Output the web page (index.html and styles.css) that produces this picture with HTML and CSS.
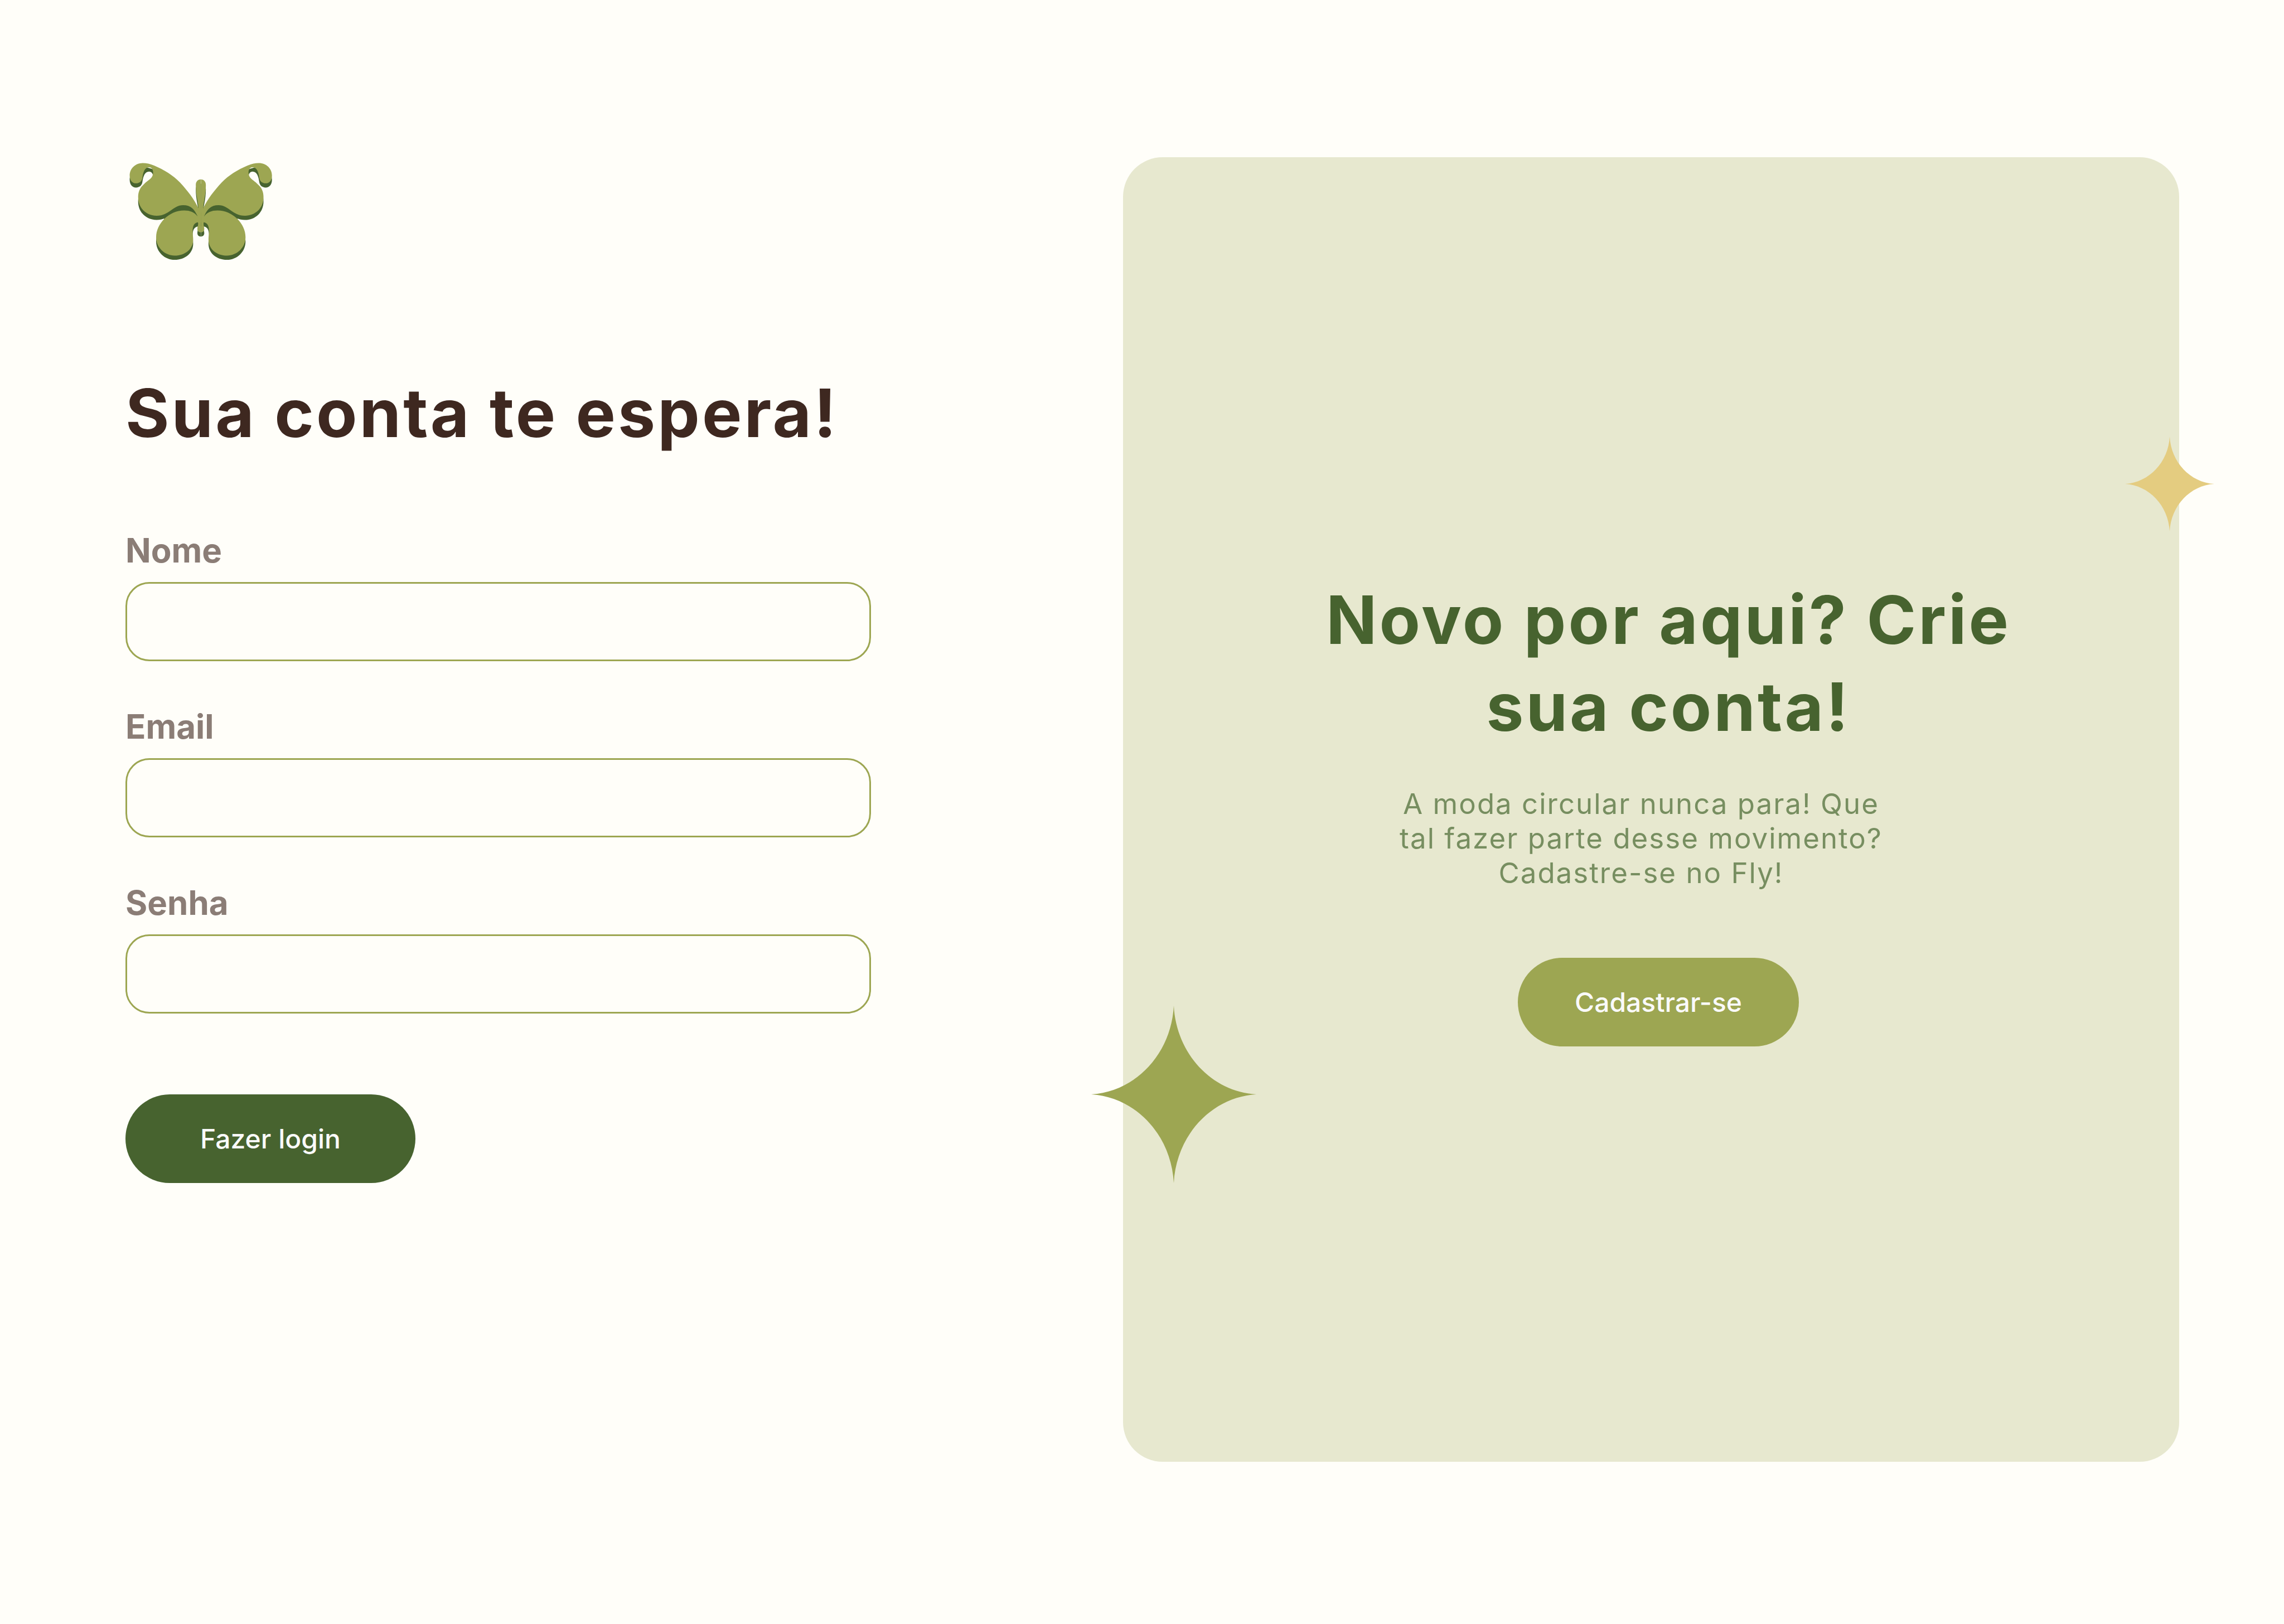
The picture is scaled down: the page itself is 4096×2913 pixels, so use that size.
FILE: index.html
```html
<!DOCTYPE html>
<html lang="pt-BR">
<head>
<meta charset="utf-8">
<meta name="viewport" content="width=device-width, initial-scale=1">
<title>Fly - Login</title>
<link rel="stylesheet" href="styles.css">
</head>
<body>
<main class="page">
  <section class="login">
    <svg class="logo" viewBox="21 21 835 585" role="img" aria-label="Fly">
      <defs>
        <path id="wing" d="M436 312C408 254 374 212 330 164C290 122 240 92 184 68C160 58 140 54 120 54C76 54 45 86 45 125C45 152 60 169 81 169C101 169 114 157 117 138C121 105 131 78 155 78C169 78 178 91 178 108C176 145 150 148 125 175C104 193 93 215 93 248C93 310 140 353 198 353C270 353 290 293 348 293C392 293 412 316 430 356L448 362V312Z"/>
        <path id="lower-wing" d="M448 356H430C412 333 388 323 354 323C310 323 272 342 243 369C212 401 195 436 195 475C195 534 244 579 300 579C360 579 405 541 405 488C405 470 402 462 402 440C402 410 412 392 432 390H448Z"/>
        <path id="body" d="M448 147C432 147 420 160 420 178C420 240 434 270 435 310L432 390C436 402 429 414 429 428C429 440 437 447 448 447Z"/>
        <g id="half"><use href="#wing"/><use href="#lower-wing"/><use href="#body"/></g>
        <g id="butterfly"><use href="#half"/><use href="#half" transform="matrix(-1 0 0 1 897 0)"/></g>
        <path id="fold" d="M240 368C280 320 310 300 348 300C390 300 414 325 430 358C380 326 330 330 240 375Z"/>
      </defs>
      <g fill="#47632f">
        <use href="#butterfly" y="24"/>
        <use href="#fold"/>
        <use href="#fold" transform="matrix(-1 0 0 1 897 0)"/>
      </g>
      <use href="#butterfly" fill="#9da652"/>
    </svg>
    <h1 class="title">Sua conta te espera!</h1>
    <form class="form">
      <div class="field">
        <label class="label" for="nome">Nome</label>
        <input class="input" id="nome" name="nome" type="text">
      </div>
      <div class="field">
        <label class="label" for="email">Email</label>
        <input class="input" id="email" name="email" type="email">
      </div>
      <div class="field">
        <label class="label" for="senha">Senha</label>
        <input class="input" id="senha" name="senha" type="password">
      </div>
      <button class="button button-login" type="submit">Fazer login</button>
    </form>
  </section>
  <aside class="panel">
    <h2 class="title panel-title">Novo por aqui? Crie<br>sua conta!</h2>
    <p class="panel-text">A moda circular nunca para! Que<br>tal fazer parte desse movimento?<br>Cadastre-se no Fly!</p>
    <button class="button button-signup" type="button">Cadastrar-se</button>
    <svg class="star star-green" viewBox="-100 -100 200 200" preserveAspectRatio="none" aria-hidden="true"><path d="M0-100C3-46 46-3 100 0C46 3 3 46 0 100C-3 46-46 3-100 0C-46-3-3-46 0-100Z"/></svg>
    <svg class="star star-gold" viewBox="-100 -100 200 200" preserveAspectRatio="none" aria-hidden="true"><path d="M0-100C3-46 46-3 100 0C46 3 3 46 0 100C-3 46-46 3-100 0C-46-3-3-46 0-100Z"/></svg>
  </aside>
</main>
</body>
</html>
```
FILE: styles.css
```css
:root {
  --cream: #fffef9;
  --sage: #e7e8cf;
  --olive: #9da652;
  --forest: #47632f;
  --brown: #3e2820;
}

* {
  box-sizing: border-box;
  margin: 0;
}

body {
  background: var(--cream);
  font-family: "Inter", sans-serif;
}

.page {
  display: flex;
  gap: 452px;
  min-height: 100vh;
  padding: 282px 188px 291px 225px;
}

.login {
  flex: 1337 1 0;
  min-width: 0;
}

.logo {
  display: block;
  width: 264px;
  height: 185px;
}

.title {
  color: var(--brown);
  font-size: 120px;
  font-weight: 700;
  line-height: 156px;
  letter-spacing: 4px;
  white-space: nowrap;
}

.login .title {
  margin-top: 196px;
}

.form {
  display: flex;
  flex-direction: column;
  gap: 83px;
  margin-top: 134px;
}

.field {
  display: flex;
  flex-direction: column;
  gap: 23px;
}

.label {
  color: #8b7d76;
  font-size: 60px;
  font-weight: 700;
  line-height: 68px;
}

.input {
  width: 100%;
  height: 142px;
  padding: 0 40px;
  border: 3px solid var(--olive);
  border-radius: 43px;
  background: transparent;
  color: var(--brown);
  font: inherit;
  font-size: 48px;
}

.button {
  height: 159px;
  border: 0;
  border-radius: 80px;
  color: #fafafa;
  font-family: inherit;
  font-size: 48px;
  font-weight: 500;
}

.button-login {
  width: 520px;
  margin-top: 62px;
  background: var(--forest);
}

.panel {
  position: relative;
  display: flex;
  flex: 1894 1 0;
  flex-direction: column;
  align-items: center;
  justify-content: center;
  min-width: 0;
  padding-top: 6px;
  border-radius: 71px;
  background: var(--sage);
}

.panel-title {
  padding-left: 62px;
  color: var(--forest);
  text-align: center;
}

.panel-text {
  margin-top: 65px;
  padding-right: 36px;
  color: #778e60;
  font-size: 51px;
  line-height: 62px;
  letter-spacing: 2px;
  text-align: center;
}

.button-signup {
  width: 504px;
  margin-top: 121px;
  margin-left: 26px;
  background: var(--olive);
}

.star {
  position: absolute;
}

.star-green {
  bottom: 500px;
  left: -57px;
  width: 296px;
  height: 318px;
  fill: var(--olive);
}

.star-gold {
  top: 501px;
  right: -63px;
  width: 160px;
  height: 170px;
  fill: #e4cc80;
}
```
